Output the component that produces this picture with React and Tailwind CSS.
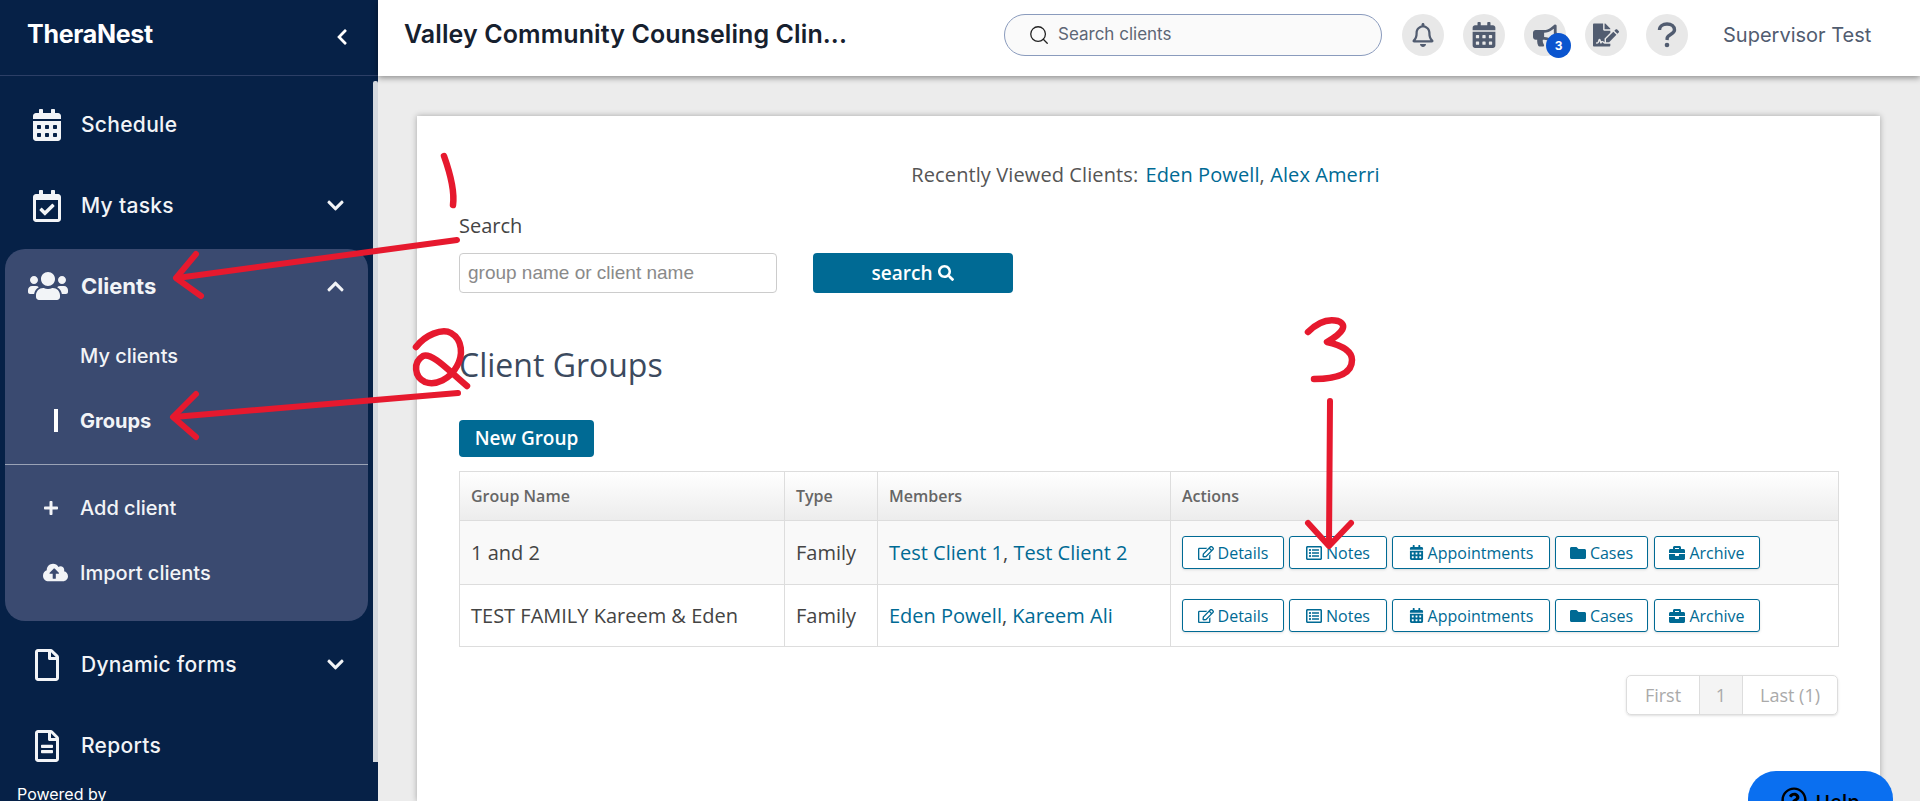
import React from 'react'
import { Search } from 'lucide-react'
import {
  FaRegBell, FaBriefcase, FaBullhorn, FaCalendarAlt, FaChevronDown, FaChevronLeft, FaChevronUp,
  FaCloudUploadAlt, FaFileSignature, FaFolder, FaPlus, FaRegCalendarCheck, FaRegEdit,
  FaRegFile, FaRegFileAlt, FaRegListAlt, FaRegQuestionCircle, FaSearch, FaUsers,
} from 'react-icons/fa'

const NavRow = ({ icon, label, chevron }) => (
  <div className="flex h-[81px] items-center text-[#f2f4f7]">
    <div className="flex w-[81px] justify-center pl-[13px]">{icon}</div>
    <span className="text-[21px] font-medium tracking-[0.3px]">{label}</span>
    {chevron && <FaChevronDown className="ml-auto mr-[33px] text-[19px]" />}
  </div>
)

const SubRow = ({ icon, label, bold }) => (
  <div className="flex h-[65px] items-center text-[#f2f4f7]">
    <div className="flex w-[75px] items-center pl-[38px]">{icon}</div>
    <span className={`text-[20px] ${bold ? 'font-bold' : 'font-medium'}`}>{label}</span>
  </div>
)

const HeaderIcon = ({ children, badge }) => (
  <div className="relative flex h-[42px] w-[42px] items-center justify-center rounded-full bg-[#e8e8e8] text-[#515c70]">
    {children}
    {badge && (
      <span className="absolute left-[22px] top-[19px] flex h-[25px] w-[25px] items-center justify-center rounded-full bg-[#0b55cf] text-[12px] font-bold text-white">
        {badge}
      </span>
    )}
  </div>
)

const ActionButton = ({ icon, label, width }) => (
  <button className={`flex h-[33px] items-center justify-center gap-[4px] rounded-[3px] border border-[#006a94] bg-white text-[16px] font-medium text-[#006a94] shadow-sm ${width}`}>
    {icon}
    <span>{label}</span>
  </button>
)

const Actions = () => (
  <div className="flex gap-[5px]">
    <ActionButton icon={<FaRegEdit className="text-[16px]" />} label="Details" width="w-[102px]" />
    <ActionButton icon={<FaRegListAlt className="text-[16px]" />} label="Notes" width="w-[98px]" />
    <ActionButton icon={<FaCalendarAlt className="text-[15px]" />} label="Appointments" width="w-[158px]" />
    <ActionButton icon={<FaFolder className="text-[16px]" />} label="Cases" width="w-[93px]" />
    <ActionButton icon={<FaBriefcase className="text-[16px]" />} label="Archive" width="ml-[1px] w-[106px]" />
  </div>
)

// hand drawn red marks sitting over the screenshot
const Annotations = () => (
  <svg className="pointer-events-none absolute left-0 top-0 h-[801px] w-[1920px]" viewBox="0 0 1920 801" fill="none" stroke="#e6192e" strokeWidth="6" strokeLinecap="round" strokeLinejoin="round">
    <path d="M444 156 C449 170 455 190 453 205" strokeWidth="6.5" />
    <path d="M457 240 L177 278" />
    <path d="M196 254 L176 278 L201 296" />
    <path d="M416 347 C425 335 442 328 451 333 C463 340 463 355 457 366 C450 379 436 386 425 382 C414 377 413 362 423 356 C432 352 450 372 467 386" strokeWidth="6.5" />
    <path d="M458 393 L174 417" />
    <path d="M196 394 L173 417 L196 437" />
    <path d="M1308 332 C1315 325 1326 318 1338 321 C1348 325 1343 333 1327 342 C1340 345 1352 350 1352 360 C1352 372 1340 379 1314 379" strokeWidth="6.5" />
    <path d="M1330 401 L1329 545" />
    <path d="M1308 523 L1329 546 L1351 523" />
  </svg>
)

const App = () => {
  return (
    <div className="relative flex h-[801px] w-[1920px] overflow-hidden bg-[#ececec] font-['Open_Sans',sans-serif]">
      <aside className="relative w-[378px] shrink-0 bg-[#062147] font-['Inter',sans-serif]">
        <div className="flex h-[76px] items-center border-b border-[#2c3f66] pb-[6px] pl-[27px] pr-[27px]">
          <span className="text-[25px] font-bold tracking-[-0.3px] text-white">TheraNest</span>
          <FaChevronLeft className="ml-auto mt-[4px] text-[18px] text-white" />
        </div>

        <div className="pt-[8px]">
          <NavRow icon={<FaCalendarAlt className="text-[32px]" />} label="Schedule" />
          <NavRow icon={<FaRegCalendarCheck className="text-[32px]" />} label="My tasks" chevron />

          <div className="ml-[5px] mr-[10px] mt-[3px] rounded-[20px] bg-[#3a4a70] pb-[16px]">
            <div className="flex h-[74px] items-center text-[#f2f4f7]">
              <div className="flex w-[76px] justify-center pl-[9px]"><FaUsers className="text-[40px]" /></div>
              <span className="text-[22px] font-bold">Clients</span>
              <FaChevronUp className="ml-auto mr-[23px] text-[19px]" />
            </div>
            <SubRow label="My clients" />
            <SubRow label="Groups" bold icon={<span className="ml-[11px] h-[23px] w-[4px] bg-white" />} />
            <div className="mt-[11px] h-px bg-[#9aa3b6]" />
            <div className="pt-[10px]">
              <SubRow label="Add client" icon={<FaPlus className="text-[16px]" />} />
              <SubRow label="Import clients" icon={<FaCloudUploadAlt className="text-[25px]" />} />
            </div>
          </div>

          <div className="mt-[3px]">
            <NavRow icon={<FaRegFile className="text-[32px]" />} label="Dynamic forms" chevron />
            <NavRow icon={<FaRegFileAlt className="text-[32px]" />} label="Reports" />
          </div>
          <div className="pl-[17px] text-[16px] leading-[16px] text-white">Powered by</div>
        </div>

        {/* scrollbar thumb */}
        <div className="absolute left-[373px] top-[81px] h-[681px] w-[5px] rounded-t-[2px] bg-[#d5d9de]" />
      </aside>

      <div className="flex min-w-0 flex-1 flex-col">
        <header className="relative z-10 flex h-[76px] shrink-0 items-center bg-white pb-[6px] pl-[26px] shadow-[0_2px_6px_rgba(0,0,0,0.4)] font-['Inter',sans-serif]">
          <div className="w-[441px] whitespace-nowrap text-[25px] font-semibold tracking-[0.1px] text-[#16202e]">Valley Community Counseling Clin...</div>
          <div className="ml-[159px] flex h-[42px] w-[378px] items-center rounded-full border border-[#8a9bbd] bg-[#fafafa] pl-[23px]">
            <Search className="h-[22px] w-[22px] text-[#222]" strokeWidth={1.4} />
            <span className="ml-[8px] text-[17px] text-[#5d6675]">Search clients</span>
          </div>
          <div className="ml-[20px] flex gap-[19px]">
            <HeaderIcon><FaRegBell className="text-[24px]" /></HeaderIcon>
            <HeaderIcon><FaCalendarAlt className="text-[26px]" /></HeaderIcon>
            <HeaderIcon badge="3"><FaBullhorn className="text-[25px]" /></HeaderIcon>
            <HeaderIcon><FaFileSignature className="text-[26px]" /></HeaderIcon>
            <HeaderIcon>
              <svg className="h-[26px] w-[20px]" viewBox="0 0 20 26" fill="none">
                <path d="M2.5 8 C2.5 4 6 2 10 2 C14.5 2 17.5 4.5 17.5 8 C17.5 12 11 12.5 10.3 15.5 L10 18" stroke="currentColor" strokeWidth="3.4" />
                <circle cx="10" cy="23" r="2.3" fill="currentColor" />
              </svg>
            </HeaderIcon>
          </div>
          <span className="ml-[35px] text-[20px] text-[#515c70]">Supervisor Test</span>
        </header>

        <main className="flex-1 pl-[39px] pr-[40px] pt-[40px]">
          <div className="h-full bg-white px-[42px] pt-[46px] shadow-[0_0_6px_rgba(0,0,0,0.3)]">
            <p className="pr-[6px] text-center text-[20px] leading-[25px] tracking-[0.1px] text-[#555]">
              Recently Viewed Clients: <span className="ml-[2px] text-[#006a94]">Eden Powell</span>, <span className="text-[#006a94]">Alex Amerri</span>
            </p>

            <label className="mt-[26px] block text-[20px] leading-[25px] text-[#444]">Search</label>
            <div className="mt-[15px] flex gap-[36px]">
              <input className="h-[40px] w-[318px] rounded-[4px] border border-[#ccc] px-[8px] font-['Liberation_Sans',sans-serif] text-[19px] placeholder:text-[#8a8a8a]" placeholder="group name or client name" />
              <button className="flex h-[40px] w-[200px] items-center justify-center gap-[6px] rounded-[4px] bg-[#006a94] text-[19px] font-semibold text-white">
                search <FaSearch className="text-[16px]" />
              </button>
            </div>

            <h1 className="mt-[48px] text-[32px] leading-[48px] text-[#3c4a5e]">Client Groups</h1>

            <button className="mt-[31px] flex h-[37px] w-[135px] items-center justify-center rounded-[4px] bg-[#006a94] text-[19px] font-semibold text-white">New Group</button>

            <table className="mt-[14px] w-[1380px] table-fixed border-collapse border border-[#ddd] text-[20px]">
              <colgroup>
                <col className="w-[325px]" />
                <col className="w-[93px]" />
                <col className="w-[293px]" />
                <col />
              </colgroup>
              <thead>
                <tr className="h-[49px] bg-gradient-to-b from-white to-[#ececec] text-left text-[16px] font-semibold text-[#666]">
                  <th className="border border-[#ddd] pl-[11px] font-semibold">Group Name</th>
                  <th className="border border-[#ddd] pl-[11px] font-semibold">Type</th>
                  <th className="border border-[#ddd] pl-[11px] font-semibold">Members</th>
                  <th className="border border-[#ddd] pl-[11px] font-semibold">Actions</th>
                </tr>
              </thead>
              <tbody className="text-[#444]">
                <tr className="h-[64px] bg-[#f9f9f9]">
                  <td className="border border-[#ddd] pl-[11px]">1 and 2</td>
                  <td className="border border-[#ddd] pl-[11px]">Family</td>
                  <td className="border border-[#ddd] pl-[11px]"><span className="text-[#006a94]">Test Client 1</span>, <span className="text-[#006a94]">Test Client 2</span></td>
                  <td className="border border-[#ddd] pl-[11px]"><Actions /></td>
                </tr>
                <tr className="h-[62px]">
                  <td className="border border-[#ddd] pl-[11px]">TEST FAMILY Kareem &amp; Eden</td>
                  <td className="border border-[#ddd] pl-[11px]">Family</td>
                  <td className="border border-[#ddd] pl-[11px]"><span className="text-[#006a94]">Eden Powell</span>, <span className="text-[#006a94]">Kareem Ali</span></td>
                  <td className="border border-[#ddd] pl-[11px]"><Actions /></td>
                </tr>
              </tbody>
            </table>

            <div className="mt-[28px] flex justify-end">
              <div className="flex h-[40px] rounded-[5px] border border-[#ddd] text-[18px] text-[#aaa] shadow-sm">
                <span className="flex w-[72px] items-center justify-center">First</span>
                <span className="flex w-[44px] items-center justify-center border-x border-[#ddd] bg-[#f4f4f4]">1</span>
                <span className="flex w-[94px] items-center justify-center">Last (1)</span>
              </div>
            </div>
          </div>
        </main>
      </div>

      <Annotations />

      <div className="absolute left-[1748px] top-[771px] flex h-[60px] w-[145px] items-start justify-center gap-[8px] rounded-[28px] bg-[#0a6ff0] pt-[16px] text-[20px] font-semibold text-black">
        <FaRegQuestionCircle className="text-[26px]" />
        <span>Help</span>
      </div>
    </div>
  )
}

export default App
